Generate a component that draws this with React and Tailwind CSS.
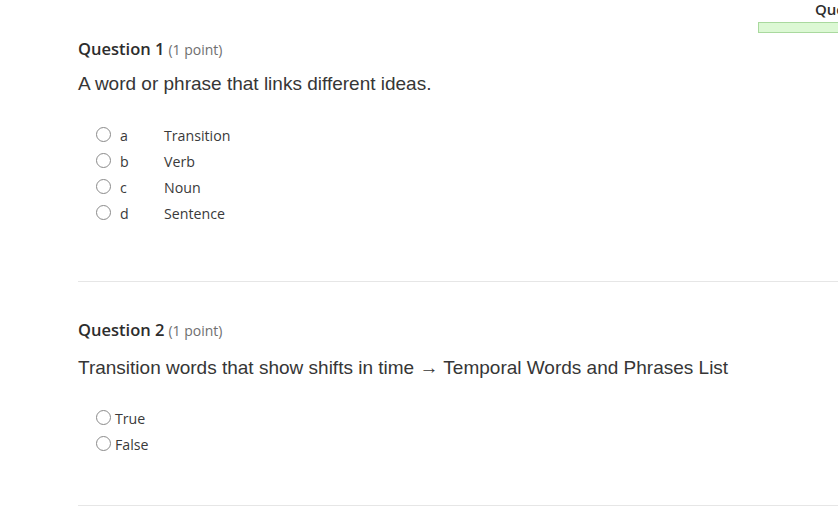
import React from 'react';

const questions = [
  {
    n: 1,
    text: 'A word or phrase that links different ideas.',
    lettered: true,
    options: [
      { key: 'a', label: 'Transition' },
      { key: 'b', label: 'Verb' },
      { key: 'c', label: 'Noun' },
      { key: 'd', label: 'Sentence' },
    ],
  },
  {
    n: 2,
    text: 'Transition words that show shifts in time \u2192 Temporal Words and Phrases List',
    lettered: false,
    options: [
      { key: 't', label: 'True' },
      { key: 'f', label: 'False' },
    ],
  },
];

function Radio() {
  return <span className="block w-[15px] h-[15px] rounded-full border border-[#8a8a8a] bg-white shrink-0" />;
}

function Question({ q }) {
  return (
    <div className="border-b border-[#e6e6e6]">
      <div className={q.lettered ? 'h-[37px]' : 'h-[36px]'} />
      <div className="flex items-baseline gap-1 h-[20px]">
        <span className="text-[16.5px] font-semibold text-[#2d2d2d] font-['Open_Sans',sans-serif]">Question {q.n}</span>
        <span className="text-[14px] text-[#6f6f6f] font-['Open_Sans',sans-serif]">(1 point)</span>
      </div>
      <p className={`${q.lettered ? 'mt-[16px]' : 'mt-[19px]'} text-[19px] leading-[22px] text-[#363636] font-['Liberation_Sans',Arial,sans-serif]`}>{q.text}</p>
      {q.lettered ? (
        <div className="mt-[32px] pl-[18px] flex flex-col gap-[11px] pb-[61px]">
          {q.options.map((o) => (
            <label key={o.key} className="flex items-center h-[15px] text-[14.2px] text-[#3a3a3a] font-['Open_Sans',sans-serif]">
              <Radio />
              <span className="ml-[9px] w-[44px] mt-[3px]">{o.key}</span>
              <span className="mt-[3px]">{o.label}</span>
            </label>
          ))}
        </div>
      ) : (
        <div className="mt-[31px] pl-[18px] flex flex-col gap-[11px] pb-[54px]">
          {q.options.map((o) => (
            <label key={o.key} className="flex items-center h-[15px] text-[14.2px] text-[#3a3a3a] font-['Open_Sans',sans-serif]">
              <Radio />
              <span className="ml-[4px] mt-[3px]">{o.label}</span>
            </label>
          ))}
        </div>
      )}
    </div>
  );
}

export default function App() {
  return (
    <div className="relative w-[838px] h-[506px] overflow-hidden bg-white">
      <div className="pl-[78px] w-[1000px]">
        {questions.map((q) => (
          <Question key={q.n} q={q} />
        ))}
      </div>
      <div className="absolute top-0 left-[758px] w-[200px]">
        <div className="pl-[57px] text-[15px] font-semibold text-[#2d2d2d] font-['Open_Sans',sans-serif] leading-[18px]">Question 1 of 10</div>
        <div className="mt-[4px] h-[11px] border border-[#a9d99e] bg-[#dcf8d4]" />
      </div>
    </div>
  );
}
